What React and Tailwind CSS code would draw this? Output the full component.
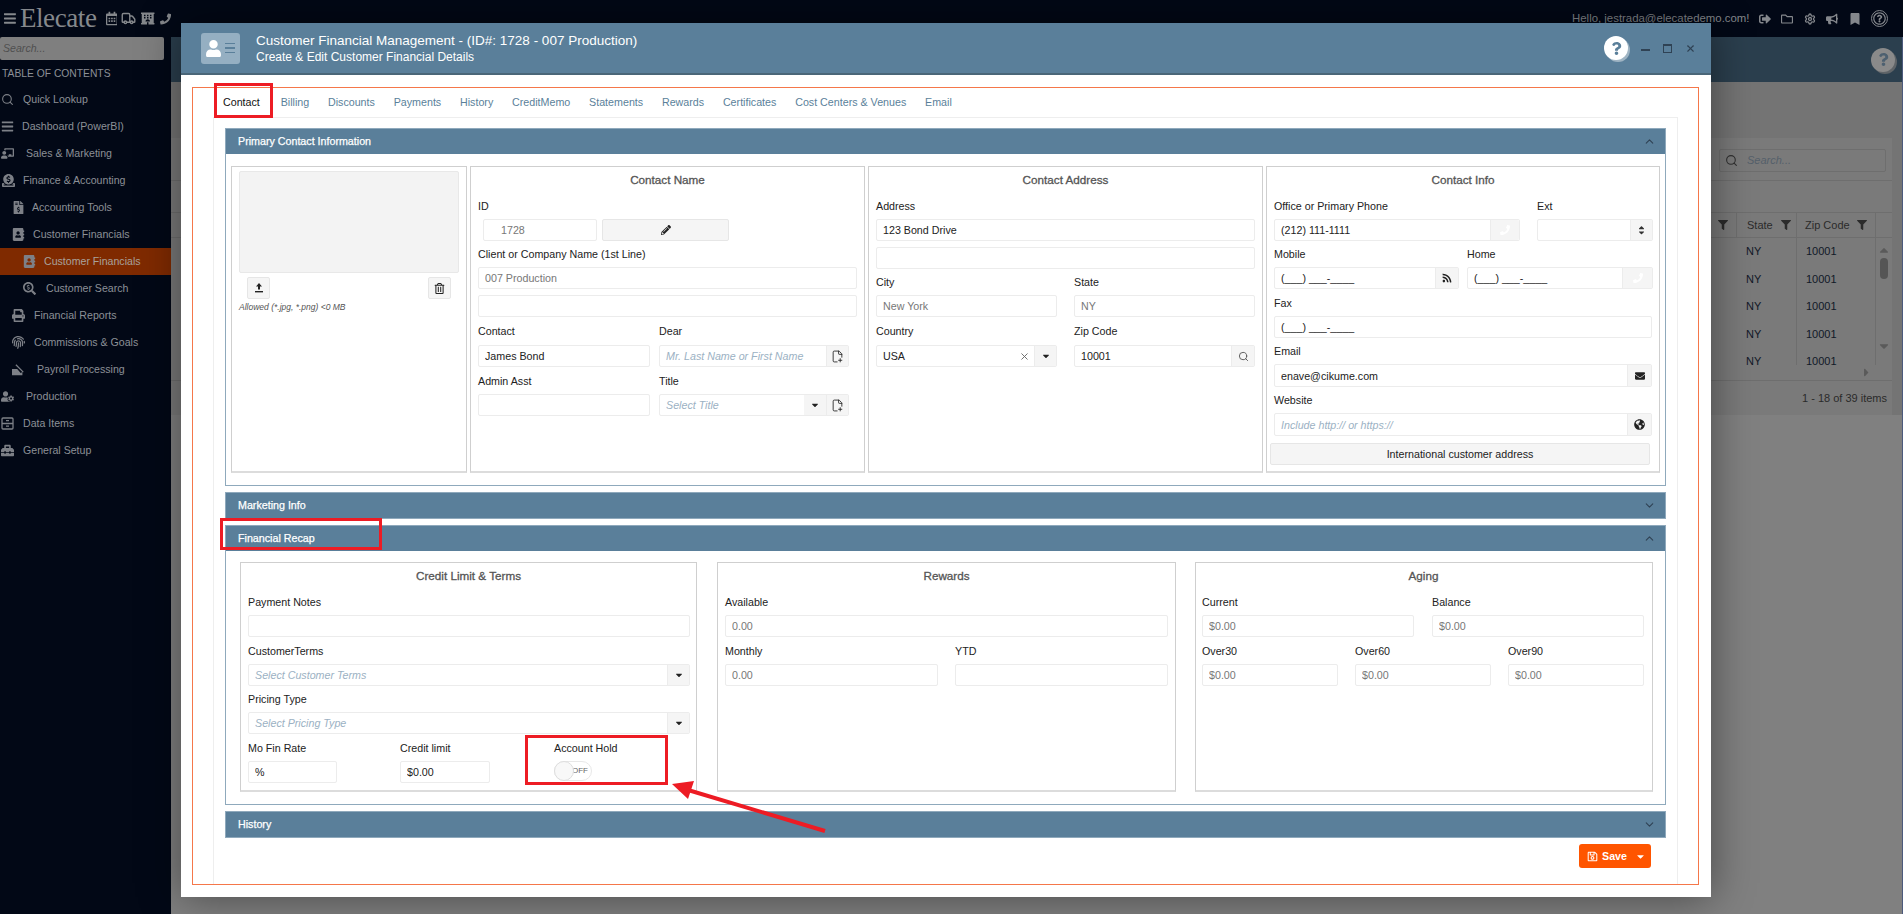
import React from "react"
import clsx from "clsx"
import { Search, Truck, ChevronUp, ChevronDown, X, FilePlus2, Settings } from "lucide-react"
import {
    FaBars, FaRegCalendarAlt, FaHotel, FaPhoneAlt, FaSignOutAlt, FaRegFolder, FaBullhorn, FaBookmark,
    FaQuestion, FaRegQuestionCircle, FaChalkboardTeacher, FaDonate, FaFileInvoiceDollar, FaAddressBook,
    FaSearchDollar, FaPrint, FaFingerprint, FaUserCog, FaToolbox, FaUser,
    FaPencilAlt, FaRss, FaEnvelope, FaGlobeAmericas, FaCaretDown, FaCaretUp, FaCaretRight, FaRegSave,
    FaRegTrashAlt, FaFilter,
} from "react-icons/fa"

// two drawer cabinet, the packages only have a filled one
const Cabinet = ({ size, className }) => (
    <svg width={size} height={size} viewBox="0 0 13 13" fill="none" stroke="currentColor" strokeWidth="1.3" className={className}>
        <rect x="1" y="1" width="11" height="11" rx="1" />
        <path d="M1 6.5h11M5 3.7h3M5 9.2h3" />
    </svg>
)

// desk slab with a pen lying on it
const Desk = ({ size, className }) => (
    <svg width={size} height={size} viewBox="0 0 15 13" fill="currentColor" className={className}>
        <path d="M0 6h6l4 4.5 2-1V13H0z" />
        <path d="M4 1.5 5 .5l8.5 8.5-1 1z" />
    </svg>
)

const MENU = [
    { label: "Quick Lookup", Icon: Search, pad: "pl-px", w: "w-[22px]" },
    { label: "Dashboard (PowerBI)", Icon: FaBars, pad: "pl-px", w: "w-[21px]" },
    { label: "Sales & Marketing", Icon: FaChalkboardTeacher, pad: "pl-px", w: "w-[25px]" },
    { label: "Finance & Accounting", Icon: FaDonate, pad: "pl-[2px]", w: "w-[21px]" },
    { label: "Accounting Tools", Icon: FaFileInvoiceDollar, pad: "pl-[12px]", w: "w-[20px]" },
    { label: "Customer Financials", Icon: FaAddressBook, pad: "pl-[12px]", w: "w-[21px]" },
    { label: "Customer Financials", Icon: FaAddressBook, pad: "pl-[23px]", w: "w-[21px]", active: true },
    { label: "Customer Search", Icon: FaSearchDollar, pad: "pl-[23px]", w: "w-[23px]" },
    { label: "Financial Reports", Icon: FaPrint, pad: "pl-[12px]", w: "w-[22px]" },
    { label: "Commissions & Goals", Icon: FaFingerprint, pad: "pl-[12px]", w: "w-[22px]" },
    { label: "Payroll Processing", Icon: Desk, pad: "pl-[12px]", w: "w-[25px]" },
    { label: "Production", Icon: FaUserCog, pad: "pl-px", w: "w-[25px]" },
    { label: "Data Items", Icon: Cabinet, pad: "pl-px", w: "w-[22px]" },
    { label: "General Setup", Icon: FaToolbox, pad: "pl-px", w: "w-[22px]" },
]

const TABS = ["Contact", "Billing", "Discounts", "Payments", "History", "CreditMemo", "Statements", "Rewards", "Certificates", "Cost Centers & Venues", "Email"]

const Sidebar = () => (
    <aside className="w-[171px] shrink-0 bg-[#020816] text-[#8c9097] text-[10.6px]">
        <div className="h-[37px] flex items-center text-[#85888c]">
            <FaBars size={15} className="ml-[4px]" />
            <span className="ml-[4px] font-['Liberation_Serif',serif] text-[27px] leading-none tracking-[-0.4px]">Elecate</span>
            <FaRegCalendarAlt size={15} className="ml-[9px]" />
            <Truck size={19} strokeWidth={2.2} className="ml-[4px]" />
            <FaHotel size={17} className="ml-[5px]" />
            <FaPhoneAlt size={14} className="ml-[5px] -scale-x-100 scale-y-100" />
        </div>
        <div className="w-[164px] h-[23px] bg-[#7f7f7f] rounded-[2px] flex items-center pl-[3px] italic text-[#4f4f4f]">Search...</div>
        <div className="h-[26px] pl-[2px] pt-[2px] flex items-center text-[10.3px] uppercase">Table of Contents</div>
        {MENU.map((item, i) => (
            <div key={i} className={clsx("h-[27px] flex items-center", item.pad, item.active && "bg-[#7f2a00] text-[#a9a29c]")}>
                <span className={clsx("shrink-0 flex", item.w)}><item.Icon size={13} className="text-[#7d8087]" /></span>
                <span>{item.label}</span>
            </div>
        ))}
    </aside>
)

const Backdrop = () => (
    <main className="flex-1 flex flex-col border-r border-[#4c5a7c] min-w-0">
        <div className="h-[45px] bg-[#2b3f4e] flex items-center justify-end pr-[7px]">
            <span className="w-[24px] h-[24px] rounded-full bg-[#8a8a8a] shadow-[2px_2px_0_#5f6468] flex items-center justify-center">
                <FaQuestion size={13} className="text-[#4d6070]" />
            </span>
        </div>
        <div className="h-[333px] bg-[#747474] pt-[56px]">
            <div className="h-[277px] mr-[10px] bg-[#7a7a7a] flex flex-col items-end">
                <div className="w-full h-[43px] border-b border-[#6e6e6e] flex justify-end items-start pt-[11px] pr-[6px]">
                    <div className="w-[167px] h-[23px] border border-[#6e6e6e] rounded-[2px] flex items-center pl-[5px] gap-[9px] italic text-[11px] text-[#55606a]">
                        <Search size={13} className="text-[#303030]" />
                        Search...
                    </div>
                </div>
                <div className="h-[31px]" />
                <div className="w-full h-[26px] border-y border-[#6e6e6e] flex justify-end text-[11px] text-[#2b2b2b]">
                    <span className="flex items-center pr-[8px] border-r border-[#6e6e6e]"><FaFilter size={10} /></span>
                    <span className="w-[60px] flex items-center gap-[8px] pl-[10px] border-r border-[#6e6e6e]">State <FaFilter size={10} /></span>
                    <span className="w-[79px] flex items-center gap-[7px] pl-[8px] border-r border-[#6e6e6e]">Zip Code <FaFilter size={10} /></span>
                    <span className="w-[16px]" />
                </div>
                <div className="h-[127px] overflow-hidden flex text-[11px] text-[#111827]">
                    <div className="w-[60px] border-r border-[#6e6e6e] pl-[9px]">
                        {[0, 1, 2, 3, 4].map((i) => <div key={i} className="h-[27.4px] flex items-center">NY</div>)}
                    </div>
                    <div className="w-[79px] border-r border-[#6e6e6e] pl-[9px]">
                        {[0, 1, 2, 3, 4].map((i) => <div key={i} className="h-[27.4px] flex items-center">10001</div>)}
                    </div>
                    <div className="w-[16px] flex flex-col items-center pt-[5px] text-[#5a5a5a]">
                        <FaCaretUp size={14} />
                        <div className="w-[8px] h-[21px] rounded-full bg-[#555] mt-[1px]" />
                        <FaCaretDown size={14} className="mt-[60px]" />
                    </div>
                </div>
                <div className="h-[15px] pr-[19px] flex items-center text-[#5a5a5a]"><FaCaretRight size={13} /></div>
                <div className="w-full h-[35px] border-t border-[#6e6e6e] flex items-center justify-end pr-[5px] text-[11px] text-[#2a2a2a]">1 - 18 of 39 items</div>
            </div>
        </div>
        <div className="flex-1 bg-[#808080]" />
    </main>
)

const Input = ({ value, placeholder, disabled, className, inputClass, children }) => (
    <div className={clsx("flex h-[22px] bg-white border border-[#ececec] rounded-[2px] overflow-hidden", className)}>
        <input
            readOnly
            value={value || ""}
            placeholder={placeholder}
            className={clsx(
                "flex-1 min-w-0 h-full px-[6px] text-[10.7px] outline-none placeholder:italic placeholder:text-[#9bb1c3]",
                disabled ? "text-[#777]" : "text-[#222]",
                inputClass
            )}
        />
        {children}
    </div>
)

const Addon = ({ className, children }) => (
    <span className={clsx("h-full shrink-0 bg-[#f5f5f5] border-l border-[#ececec] flex items-center justify-center text-[#222]", className)}>{children}</span>
)

const Label = ({ className, children }) => (
    <label className={clsx("h-[26px] pt-px flex items-center text-[10.7px] text-[#222]", className)}>{children}</label>
)

const Card = ({ title, className, children }) => (
    <section className={clsx("shrink-0 bg-white border border-[#cfcfcf] border-b-2 border-b-[#dcdcdc] px-[7px]", className)}>
        <h3 className="h-[26px] pb-px flex items-center justify-center text-[11.7px] text-[#555] [-webkit-text-stroke:0.3px_#555]">{title}</h3>
        {children}
    </section>
)

const Panel = ({ title, open, children }) => (
    <div className="border border-[#8fa9bc]">
        <div className="h-[25px] bg-[#5a7f9a] flex items-center justify-between pl-[12px] pr-[9px] text-[10.7px] text-white [-webkit-text-stroke:0.25px_#ffffff]">
            {title}
            {open ? <ChevronUp size={13} className="text-[#2f4254]" /> : <ChevronDown size={13} className="text-[#2f4254]" />}
        </div>
        {children}
    </div>
)

const PhoneAddon = ({ className }) => (
    <Addon className={className}><FaPhoneAlt size={10} className="text-white -scale-x-100" /></Addon>
)

const Caret = ({ className }) => <Addon className={clsx("w-[22px]", className)}><FaCaretDown size={10} /></Addon>

const NewFile = () => <Addon className="w-[22px]"><FilePlus2 size={13} strokeWidth={1.6} /></Addon>

const PhotoCard = () => (
    <section className="w-[236px] shrink-0 bg-white border border-[#cfcfcf] border-b-2 border-b-[#dcdcdc] pt-[4px] px-[7px]">
        <div className="h-[102px] w-[220px] bg-[#f3f3f3] border border-[#e8e8e8] rounded-[2px]" />
        <div className="flex justify-between px-[8px] mt-[4px]">
            <button className="w-[23px] h-[22px] bg-[#f5f5f5] border border-[#e6e6e6] rounded-[2px] flex items-center justify-center text-[#222]">
                <svg width="10" height="10" viewBox="0 0 10 10" fill="currentColor">
                    <path d="M5 0 8 3.5H6V6.5H4V3.5H2z" />
                    <rect x="1" y="8" width="8" height="1.4" />
                </svg>
            </button>
            <button className="w-[23px] h-[22px] bg-[#f5f5f5] border border-[#e6e6e6] rounded-[2px] flex items-center justify-center text-[#222]">
                <FaRegTrashAlt size={11} />
            </button>
        </div>
        <p className="mt-[1px] text-[8.5px] leading-[14px] italic text-[#555]">Allowed (*.jpg, *.png) &lt;0 MB</p>
    </section>
)

const ContactName = () => (
    <Card title="Contact Name" className="w-[395px]">
        <Label>ID</Label>
        <div className="flex gap-[5px] pl-[5px]">
            <Input value="1728" disabled className="w-[114px]" inputClass="pl-[17px]" />
            <button className="w-[127px] h-[22px] bg-[#f5f5f5] border border-[#e6e6e6] rounded-[2px] flex items-center justify-center text-[#222]">
                <FaPencilAlt size={10} />
            </button>
        </div>
        <Label>Client or Company Name (1st Line)</Label>
        <Input value="007 Production" disabled />
        <Input className="mt-[6px]" />
        <div className="grid grid-cols-[172px_190px] gap-x-[9px]">
            <Label className="h-[28px]">Contact</Label>
            <Label className="h-[28px]">Dear</Label>
            <Input value="James Bond" />
            <Input placeholder="Mr. Last Name or First Name"><NewFile /></Input>
            <Label className="h-[27px]">Admin Asst</Label>
            <Label className="h-[27px]">Title</Label>
            <Input />
            <Input placeholder="Select Title">
                <Caret className="w-[19px] border-l-0" />
                <NewFile />
            </Input>
        </div>
    </Card>
)

const ContactAddress = () => (
    <Card title="Contact Address" className="w-[395px]">
        <Label>Address</Label>
        <Input value="123 Bond Drive" />
        <Input className="mt-[6px]" />
        <div className="grid grid-cols-[181px_181px] gap-x-[17px]">
            <Label>City</Label>
            <Label>State</Label>
            <Input value="New York" disabled />
            <Input value="NY" disabled />
            <Label className="h-[28px]">Country</Label>
            <Label className="h-[28px]">Zip Code</Label>
            <Input value="USA">
                <X size={11} className="self-center mr-[4px] text-[#666]" />
                <Caret className="w-[21px]" />
            </Input>
            <Input value="10001">
                <Addon className="w-[23px]"><Search size={11} className="text-[#555]" /></Addon>
            </Input>
        </div>
    </Card>
)

const ContactInfo = () => (
    <Card title="Contact Info" className="w-[394px]">
        <div className="grid grid-cols-[246px_116px] gap-x-[17px]">
            <Label>Office or Primary Phone</Label>
            <Label>Ext</Label>
            <Input value="(212) 111-1111"><PhoneAddon className="w-[29px] rounded-r-[2px]" /></Input>
            <Input>
                <Addon className="w-[22px] flex-col text-[#333]"><FaCaretUp size={9} className="-mb-[2px]" /><FaCaretDown size={9} className="-mt-[2px]" /></Addon>
            </Input>
        </div>
        <div className="grid grid-cols-[185px_186px] gap-x-[8px]">
            <Label>Mobile</Label>
            <Label>Home</Label>
            <Input value="(___) ___-____"><Addon className="w-[23px]"><FaRss size={10} /></Addon></Input>
            <Input value="(___) ___-____"><PhoneAddon className="w-[30px]" /></Input>
        </div>
        <Label className="h-[27px]">Fax</Label>
        <Input value="(___) ___-____" />
        <Label>Email</Label>
        <Input value="enave@cikume.com" className="h-[23px]"><Addon className="w-[24px]"><FaEnvelope size={10} /></Addon></Input>
        <Label>Website</Label>
        <Input placeholder="Include http:// or https://" className="h-[23px]"><Addon className="w-[24px]"><FaGlobeAmericas size={11} /></Addon></Input>
        <button className="w-[380px] h-[22px] mt-[7px] -ml-[4px] bg-[#f5f5f5] border border-[#e6e6e6] rounded-[2px] text-[10.7px] text-[#222]">International customer address</button>
    </Card>
)

const CreditCard = () => (
    <Card title="Credit Limit & Terms" className="w-[457px] h-[230px]">
        <Label>Payment Notes</Label>
        <Input className="w-[442px]" />
        <Label className="h-[27px]">CustomerTerms</Label>
        <Input placeholder="Select Customer Terms" className="w-[442px]"><Caret /></Input>
        <Label>Pricing Type</Label>
        <Input placeholder="Select Pricing Type" className="w-[442px]"><Caret /></Input>
        <div className="flex">
            <div className="w-[152px]">
                <Label className="h-[27px]">Mo Fin Rate</Label>
                <Input value="%" className="w-[89px]" />
            </div>
            <div className="w-[154px]">
                <Label className="h-[27px]">Credit limit</Label>
                <Input value="$0.00" className="w-[90px]" />
            </div>
            <div>
                <Label className="h-[27px]">Account Hold</Label>
                <div className="relative w-[38px] h-[20px] rounded-full border border-[#e8e8e8] flex items-center justify-end pr-[3px] text-[8px] text-[#666]">
                    OFF
                    <span className="absolute -left-px -top-px w-[20px] h-[20px] rounded-full bg-[#f8f8f8] border border-[#dedede]" />
                </div>
            </div>
        </div>
    </Card>
)

const RewardsCard = () => (
    <Card title="Rewards" className="w-[459px] h-[230px]">
        <Label>Available</Label>
        <Input value="0.00" disabled />
        <div className="grid grid-cols-[213px_213px] gap-x-[17px]">
            <Label className="h-[27px]">Monthly</Label>
            <Label className="h-[27px]">YTD</Label>
            <Input value="0.00" disabled />
            <Input disabled />
        </div>
    </Card>
)

const AgingCard = () => (
    <Card title="Aging" className="w-[458px] h-[230px] pl-[6px]">
        <div className="grid grid-cols-[212px_212px] gap-x-[18px]">
            <Label>Current</Label>
            <Label>Balance</Label>
            <Input value="$0.00" disabled />
            <Input value="$0.00" disabled />
        </div>
        <div className="grid grid-cols-[136px_136px_136px] gap-x-[17px]">
            <Label className="h-[27px]">Over30</Label>
            <Label className="h-[27px]">Over60</Label>
            <Label className="h-[27px]">Over90</Label>
            <Input value="$0.00" disabled />
            <Input value="$0.00" disabled />
            <Input value="$0.00" disabled />
        </div>
    </Card>
)

const WindowBar = () => (
    <header className="h-[52px] shrink-0 bg-[#5a7f9a] border-b-2 border-[#4a6678] flex items-center text-white">
        <div className="relative ml-[20px] w-[39px] h-[31px] rounded-[3px] bg-[#95afc2] flex items-center pl-[4px] gap-[3px]">
            <FaUser size={17} />
            <span className="flex flex-col gap-[3px]">
                <span className="w-[10px] h-[1.5px] bg-[#5a7f9a]" />
                <span className="w-[10px] h-[1.5px] bg-[#5a7f9a]" />
                <span className="w-[10px] h-[1.5px] bg-[#5a7f9a]" />
            </span>
        </div>
        <div className="ml-[16px] flex flex-col">
            <span className="text-[13.5px] leading-[18px]">Customer Financial Management - (ID#: 1728 - 007 Production)</span>
            <span className="text-[12px] leading-[15px]">Create &amp; Edit Customer Financial Details</span>
        </div>
        <span className="ml-auto w-[24px] h-[24px] rounded-full bg-white shadow-[2px_2px_0_#9fb4c3] flex items-center justify-center">
            <FaQuestion size={13} className="text-[#5a7f9a]" />
        </span>
        <div className="ml-[13px] mr-[15px] flex items-center gap-[13px] text-[#2f4254]">
            <span className="w-[9px] h-[2px] bg-[#2f4254] mt-[4px]" />
            <span className="w-[9px] h-[9px] border border-[#2f4254] border-t-[2px]" />
            <X size={11} strokeWidth={2.4} />
        </div>
    </header>
)

const Modal = () => (
    <div className="absolute left-[181px] top-[23px] w-[1530px] h-[874px] bg-white flex flex-col font-['Liberation_Sans',sans-serif] shadow-[0_0_40px_rgba(0,0,0,0.45)]">
        <WindowBar />
        <div className="flex-1 min-h-0 p-[12px] pl-[11px]">
            <div className="h-full border border-[#f5774a] px-[20px] flex flex-col">
                <nav className="h-[29px] shrink-0 flex items-center gap-[18.8px] pl-[10px] text-[10.7px] text-[#5a7f9a]">
                    {TABS.map((t, i) => <span key={t} className={clsx(i === 0 && "text-[#111] mr-[2px]")}>{t}</span>)}
                </nav>
                <div className="flex-1 border border-b-0 border-[#eeeeee] pl-[11px] pr-[11px] pt-[10px] flex flex-col gap-[6px]">
                    <Panel title="Primary Contact Information" open>
                        <div className="flex gap-[3px] pl-[5px] pt-[12px] pb-[12px] h-[331px]">
                            <PhotoCard />
                            <ContactName />
                            <ContactAddress />
                            <ContactInfo />
                        </div>
                    </Panel>
                    <Panel title="Marketing Info" />
                    <Panel title="Financial Recap" open>
                        <div className="flex pl-[14px] pt-[11px] pb-[12px]">
                            <CreditCard />
                            <div className="w-[20px] shrink-0" />
                            <RewardsCard />
                            <div className="w-[19px] shrink-0" />
                            <AgingCard />
                        </div>
                    </Panel>
                    <Panel title="History" />
                    <div className="flex justify-end pr-[15px]">
                        <button className="w-[72px] h-[24px] bg-[#ff5500] rounded-[3px] text-white text-[10.7px] font-bold flex items-center pl-[8px]">
                            <FaRegSave size={11} className="mr-[4px]" />
                            Save
                            <FaCaretDown size={11} className="ml-auto mr-[5px]" />
                        </button>
                    </div>
                </div>
            </div>
        </div>
    </div>
)

const Annotations = () => (
    <>
        <div className="absolute left-[214px] top-[83px] w-[59px] h-[35px] border-[3.5px] border-[#ed1c24]" />
        <div className="absolute left-[220px] top-[518px] w-[162px] h-[32px] border-[3.5px] border-[#ed1c24]" />
        <div className="absolute left-[525px] top-[735px] w-[143px] h-[50px] border-[3.5px] border-[#ed1c24]" />
        <svg className="absolute left-[660px] top-[770px]" width="180" height="70">
            <line x1="165" y1="61" x2="28" y2="20" stroke="#ed1c24" strokeWidth="4" />
            <polygon points="12,14 34,11 28,29" fill="#ed1c24" />
        </svg>
    </>
)

const TopRight = () => (
    <div className="absolute right-[15px] top-0 h-[37px] flex items-center text-[#84878c] text-[11.4px]">
        <span className="mr-[9px]">Hello, jestrada@elecatedemo.com!</span>
        <div className="flex items-center gap-[10.5px]">
            <FaSignOutAlt size={12} />
            <FaRegFolder size={12} />
            <Settings size={12} strokeWidth={2.6} />
            <FaBullhorn size={12} />
            <FaBookmark size={12} />
            <span className="w-[17px] h-[17px] rounded-full border border-[#84878c] flex items-center justify-center"><FaRegQuestionCircle size={13} /></span>
        </div>
    </div>
)

const App = () => (
    <div className="relative w-screen h-screen overflow-hidden bg-[#020816] font-['Liberation_Sans',sans-serif]">
        <div className="h-full flex flex-col">
            <div className="flex-1 flex min-h-0">
                <Sidebar />
                <div className="flex-1 flex flex-col min-w-0">
                    <div className="h-[37px] shrink-0" />
                    <Backdrop />
                </div>
            </div>
        </div>
        <TopRight />
        <Modal />
        <Annotations />
    </div>
)

export default App
